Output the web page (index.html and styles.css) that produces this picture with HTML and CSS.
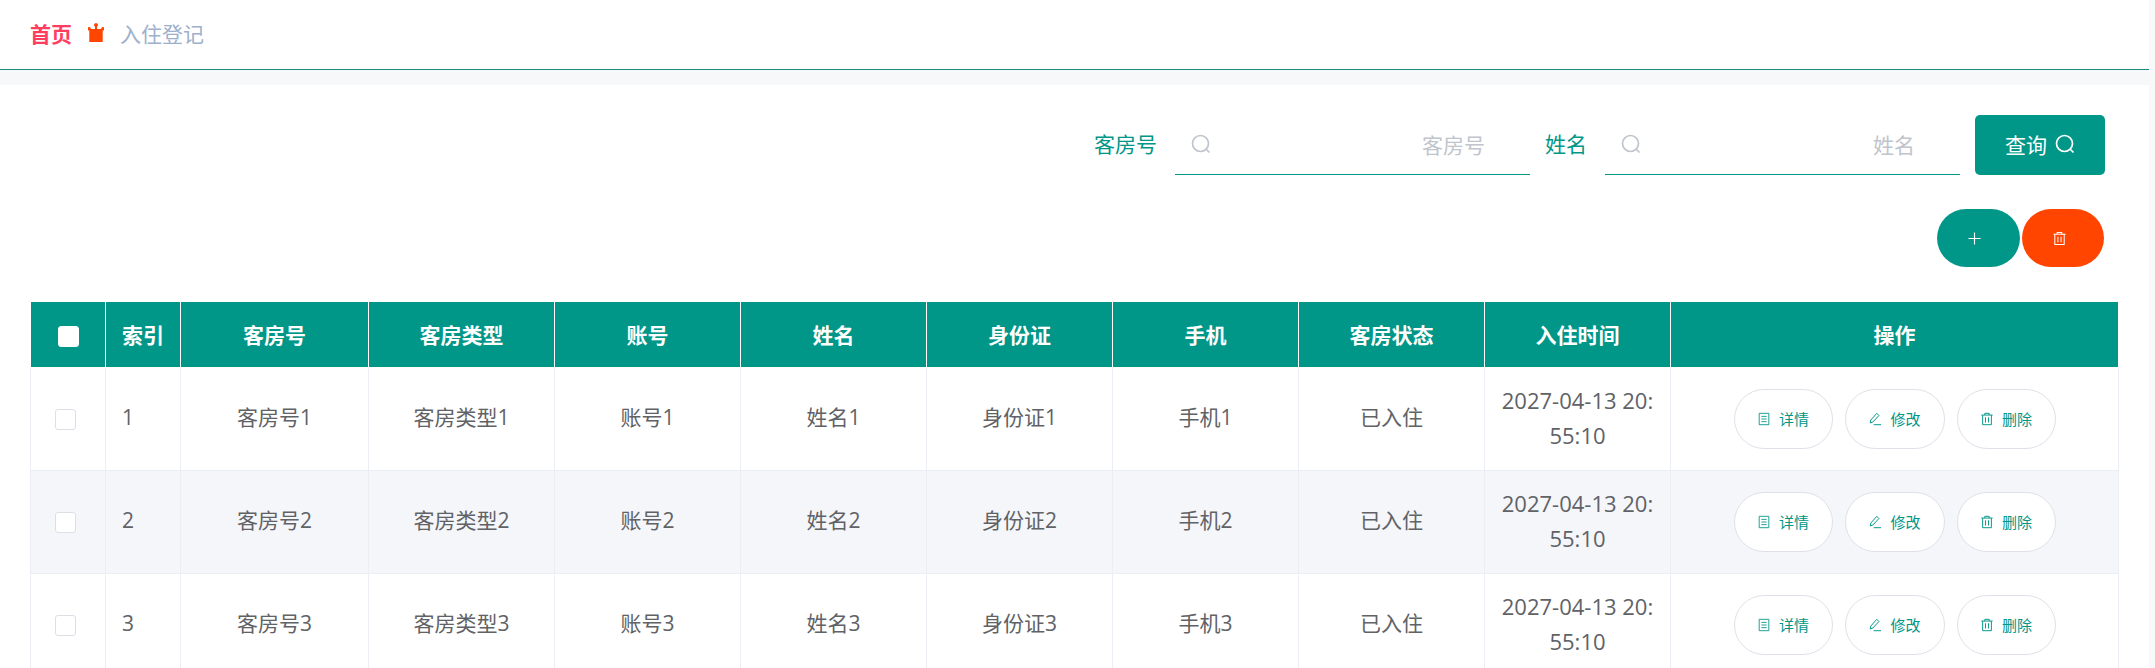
FILE: index.html
```html
<!DOCTYPE html>
<html lang="zh-CN">
<head>
    <meta charset="UTF-8">
    <title>入住登记</title>
    <link rel="stylesheet" href="styles.css">
</head>
<body>
    <svg class="icon-defs" width="0" height="0">
        <symbol id="i-search" viewBox="0 0 20 20">
            <circle cx="9.5" cy="9.500" r="8" fill="none" stroke="currentColor" stroke-width="1.7"/>
            <path d="M15 15l3.500 3.500" fill="none" stroke="currentColor" stroke-width="1.7"/>
        </symbol>
        <symbol id="i-trash" viewBox="0 0 16 16">
            <path d="M1.500 3.500h13M5.500 3.500V1.500h5v2M3 3.500v11h10v-11M6.300 6v6M9.700 6v6" fill="none" stroke="currentColor" stroke-width="1.100"/>
        </symbol>
        <symbol id="i-doc" viewBox="0 0 16 16">
            <path d="M2.500 1.500h11v13h-11zM5 5h6M5 8h6M5 11h6" fill="none" stroke="currentColor" stroke-width="1"/>
        </symbol>
        <symbol id="i-edit" viewBox="0 0 16 16">
            <path d="M10 1.500l2.500 2.500-7 7.500-3 1 .7-3.300zM6.500 14.500h8.500" fill="none" stroke="currentColor" stroke-width="1.100"/>
        </symbol>
    </svg>

    <div class="crumb">
        <span class="crumb-home">首页</span>
        <svg class="crumb-icon" viewBox="0 0 16 19"><path d="M8 0a2 2 0 0 1 1 3.700V6h4.200a1.700 1.700 0 1 1 1.500 1.500V19H1.300V7.500A1.700 1.700 0 1 1 2.800 6H7V3.700A2 2 0 0 1 8 0z" fill="#ff4500"/></svg>
        <span class="crumb-now">入住登记</span>
    </div>
    <div class="strip"></div>

    <div class="panel">
        <div class="search-row">
            <label class="search-label">客房号</label>
            <div class="search-input">
                <svg class="search-icon"><use href="#i-search"/></svg>
                <span class="search-hint">客房号</span>
            </div>
            <label class="search-label search-label-short">姓名</label>
            <div class="search-input">
                <svg class="search-icon"><use href="#i-search"/></svg>
                <span class="search-hint">姓名</span>
            </div>
            <button class="search-btn">查询 <svg class="search-btn-icon"><use href="#i-search"/></svg></button>
        </div>

        <div class="tool-row">
            <button class="tool-btn tool-add">
                <svg class="tool-icon" viewBox="0 0 16 16"><path d="M8 1.500v13M1.500 8h13" fill="none" stroke="currentColor" stroke-width="1.200"/></svg>
            </button>
            <button class="tool-btn tool-del">
                <svg class="tool-icon"><use href="#i-trash"/></svg>
            </button>
        </div>

        <table class="grid">
            <colgroup>
                <col class="col-small"><col class="col-small"><col class="col-room"><col class="col-text"><col class="col-text">
                <col class="col-text"><col class="col-text"><col class="col-text"><col class="col-text"><col class="col-text"><col>
            </colgroup>
            <thead>
                <tr>
                    <th><span class="check check-head"></span></th>
                    <th>索引</th><th>客房号</th><th>客房类型</th><th>账号</th><th>姓名</th>
                    <th>身份证</th><th>手机</th><th>客房状态</th><th>入住时间</th><th>操作</th>
                </tr>
            </thead>
            <tbody>
                <tr>
                    <td><span class="check"></span></td>
                    <td class="cell-index">1</td><td>客房号1</td><td>客房类型1</td><td>账号1</td><td>姓名1</td>
                    <td>身份证1</td><td>手机1</td><td>已入住</td><td class="cell-date">2027-04-13 20:55:10</td>
                    <td class="cell-actions">
                        <div class="actions">
                            <button class="act-btn"><svg class="act-icon"><use href="#i-doc"/></svg>详情</button>
                            <button class="act-btn"><svg class="act-icon"><use href="#i-edit"/></svg>修改</button>
                            <button class="act-btn"><svg class="act-icon"><use href="#i-trash"/></svg>删除</button>
                        </div>
                    </td>
                </tr>
                <tr>
                    <td><span class="check"></span></td>
                    <td class="cell-index">2</td><td>客房号2</td><td>客房类型2</td><td>账号2</td><td>姓名2</td>
                    <td>身份证2</td><td>手机2</td><td>已入住</td><td class="cell-date">2027-04-13 20:55:10</td>
                    <td class="cell-actions">
                        <div class="actions">
                            <button class="act-btn"><svg class="act-icon"><use href="#i-doc"/></svg>详情</button>
                            <button class="act-btn"><svg class="act-icon"><use href="#i-edit"/></svg>修改</button>
                            <button class="act-btn"><svg class="act-icon"><use href="#i-trash"/></svg>删除</button>
                        </div>
                    </td>
                </tr>
                <tr>
                    <td><span class="check"></span></td>
                    <td class="cell-index">3</td><td>客房号3</td><td>客房类型3</td><td>账号3</td><td>姓名3</td>
                    <td>身份证3</td><td>手机3</td><td>已入住</td><td class="cell-date">2027-04-13 20:55:10</td>
                    <td class="cell-actions">
                        <div class="actions">
                            <button class="act-btn"><svg class="act-icon"><use href="#i-doc"/></svg>详情</button>
                            <button class="act-btn"><svg class="act-icon"><use href="#i-edit"/></svg>修改</button>
                            <button class="act-btn"><svg class="act-icon"><use href="#i-trash"/></svg>删除</button>
                        </div>
                    </td>
                </tr>
            </tbody>
        </table>
    </div>
</body>
</html>
```

FILE: styles.css
```css
* {
    box-sizing: border-box;
}

html, body {
    height: 100%;
    overflow: hidden;
}

body {
    margin: 0;
    padding-right: 6px;
    background: #f7f8fa;
    color: #606266;
    font-family: "Open Sans", "Noto Sans CJK SC", sans-serif;
    font-size: 21px;
}

.icon-defs {
    position: absolute;
}

.crumb {
    display: flex;
    align-items: center;
    height: 70px;
    padding: 0 0 4px 30px;
    background: #fff;
    border-bottom: 1px solid #1a8a7a;
}

.crumb-home {
    color: #ff3d5f;
    font-weight: 700;
}

.crumb-icon {
    width: 16px;
    height: 19px;
    margin: 0 16px;
}

.crumb-now {
    color: #9db0cc;
}

.strip {
    height: 15px;
}

.panel {
    height: 600px;
    padding: 30px 0 0 30px;
    background: #fff;
}

.search-row {
    display: flex;
    align-items: flex-start;
    justify-content: flex-end;
    padding-right: 44px;
}

.search-label {
    width: 82px;
    padding-right: 18px;
    color: #009688;
    line-height: 58px;
    text-align: right;
}

.search-label-short {
    width: 75px;
}

.search-input {
    display: flex;
    align-items: center;
    justify-content: space-between;
    width: 355px;
    height: 60px;
    padding: 0 45px 2px 16px;
    border-bottom: 1px solid #009688;
    color: #c0c4cc;
}

.search-icon {
    width: 20px;
    height: 20px;
}

.search-btn {
    display: flex;
    align-items: center;
    justify-content: center;
    gap: 8px;
    width: 130px;
    height: 60px;
    margin-left: 15px;
    padding: 0 0 3px;
    border: none;
    border-radius: 5px;
    background: #009688;
    color: #fff;
    font-family: inherit;
    font-size: 21px;
}

.search-btn-icon {
    width: 20px;
    height: 20px;
}

.tool-row {
    display: flex;
    justify-content: flex-end;
    gap: 2px;
    margin-top: 34px;
    padding-right: 45px;
}

.tool-btn {
    display: flex;
    align-items: center;
    justify-content: center;
    height: 58px;
    padding: 0 8px 0 0;
    border: none;
    border-radius: 29px;
    color: #fff;
}

.tool-add {
    width: 83px;
    background: #009688;
}

.tool-del {
    width: 82px;
    background: #ff4500;
}

.tool-icon {
    width: 15px;
    height: 15px;
}

.grid {
    width: 2089px;
    margin-top: 35px;
    border-collapse: collapse;
    table-layout: fixed;
    text-align: center;
}

.col-small {
    width: 75px;
}

.col-room {
    width: 188px;
}

.col-text {
    width: 186px;
}

.grid th {
    height: 65px;
    padding: 0;
    border: 1px solid #fff;
    border-top: none;
    background: #009688;
    color: #fff;
    font-size: 21px;
    font-weight: 700;
}

.grid td {
    height: 103px;
    padding: 0 0 2px;
    border: 1px solid #ebeef5;
    font-size: 21px;
    line-height: 35px;
}

.grid tbody tr:nth-child(even) td {
    background: #f5f6fa;
}

.grid .cell-index {
    padding-left: 16px;
    text-align: left;
}

.grid .cell-date {
    padding: 0 15px 2px;
    font-size: 22px;
    word-break: break-all;
}

.grid .cell-actions {
    padding: 0;
}

.check {
    display: inline-block;
    width: 21px;
    height: 21px;
    margin-right: 5px;
    border: 1px solid #dcdfe6;
    border-radius: 3px;
    background: #fff;
    vertical-align: middle;
}

.check-head {
    margin-right: 0;
    border-color: #fff;
}

.actions {
    display: flex;
    justify-content: center;
    gap: 12px;
}

.act-btn {
    display: flex;
    align-items: center;
    justify-content: center;
    gap: 8px;
    width: 99px;
    height: 60px;
    padding: 0;
    border: 1px solid #dfe1e8;
    border-radius: 30px;
    background: #fff;
    color: #009688;
    font-family: inherit;
    font-size: 15px;
}

.act-btn:nth-child(2) {
    width: 100px;
}

.act-icon {
    width: 14px;
    height: 14px;
}
```
